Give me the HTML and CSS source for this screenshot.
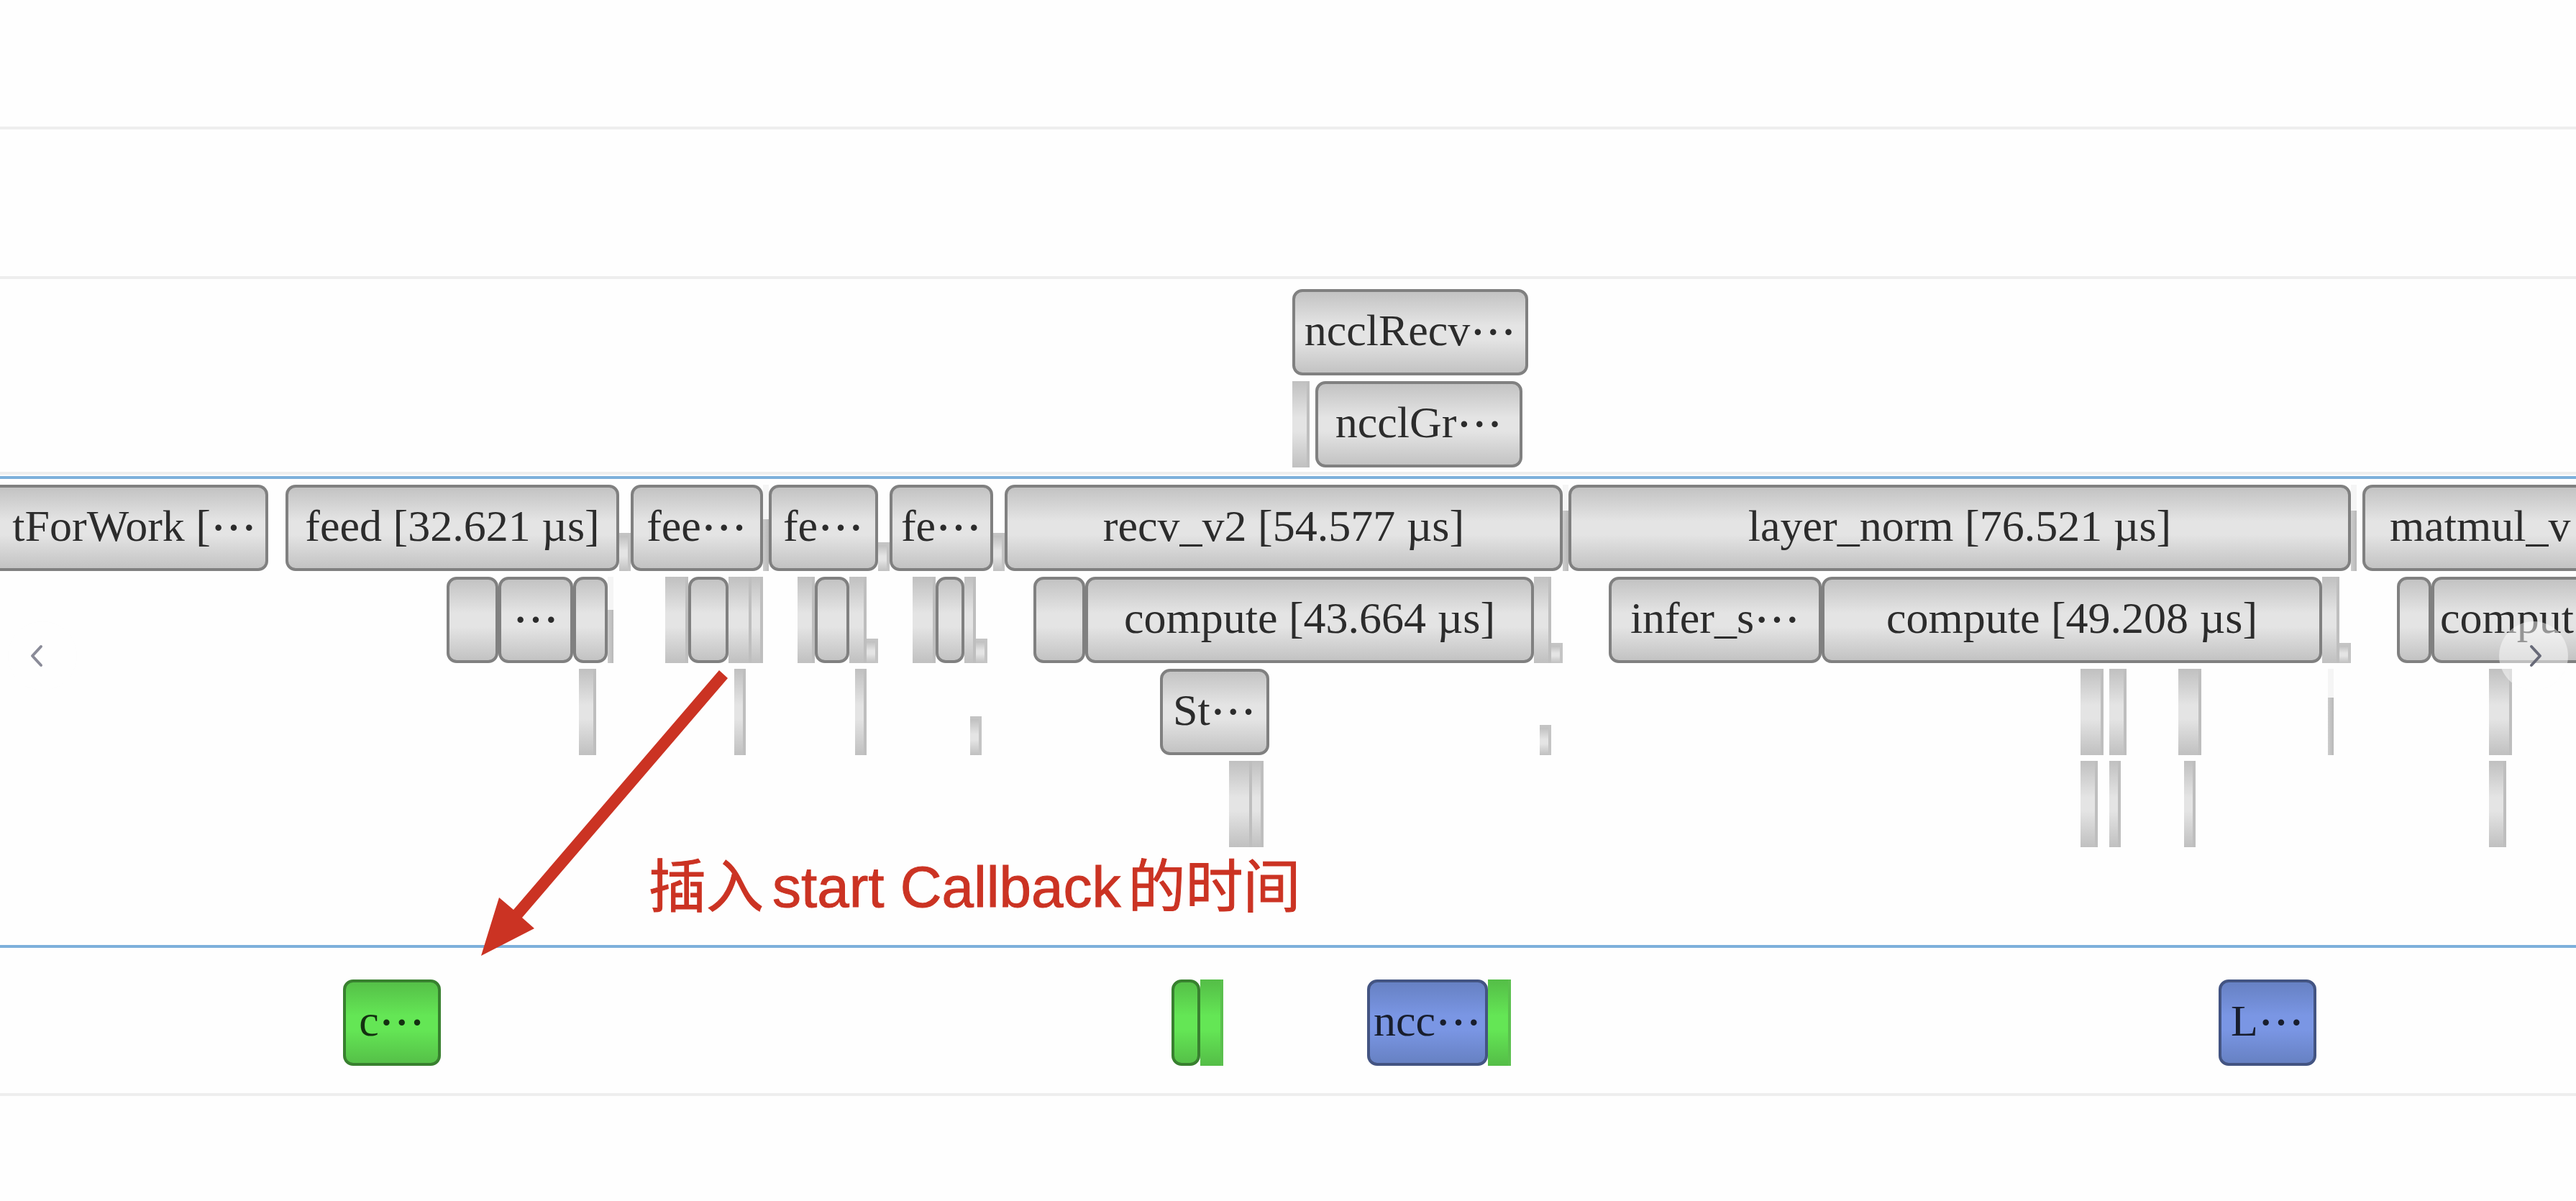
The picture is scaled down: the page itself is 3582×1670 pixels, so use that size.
FILE: index.html
```html
<!DOCTYPE html>
<html lang="zh-CN">
<head>
<meta charset="utf-8">
<meta name="viewport" content="width=device-width, initial-scale=1">
<title>Timeline</title>
<link rel="stylesheet" href="styles.css">
</head>
<body>
<main class="timeline">
  <section class="lane lane-short"></section>
  <section class="lane lane-tall"></section>

  <section class="lane lane-nccl">
    <div class="row">
      <div class="span" style="--gap:1797;--len:328">ncclRecv<span class="dots">⋯</span></div>
    </div>
    <div class="row">
      <div class="tick" style="--gap:1797;--len:24"></div>
      <div class="span" style="--gap:8;--len:288">ncclGr<span class="dots">⋯</span></div>
    </div>
  </section>

  <section class="lane lane-host">
    <div class="row">
      <div class="span cut-left" style="--len:373">tForWork [<span class="dots">⋯</span></div>
      <div class="span" style="--gap:24;--len:464">feed [32.621 µs]</div>
      <div class="tick partial" style="--len:16;--load:53"></div>
      <div class="span" style="--len:184">fee<span class="dots">⋯</span></div>
      <div class="tick faint" style="--len:8;--load:72"></div>
      <div class="span" style="--len:152">fe<span class="dots">⋯</span></div>
      <div class="tick partial" style="--len:16;--load:40"></div>
      <div class="span" style="--len:144">fe<span class="dots">⋯</span></div>
      <div class="tick partial" style="--len:16;--load:53"></div>
      <div class="span" style="--len:776">recv_v2 [54.577 µs]</div>
      <div class="tick faint" style="--len:8;--load:84"></div>
      <div class="span" style="--len:1088">layer_norm [76.521 µs]</div>
      <div class="tick faint" style="--len:8;--load:84"></div>
      <div class="span cut-right inset" style="--gap:8;--len:297">matmul_v</div>
    </div>
    <div class="row">
      <div class="span" style="--gap:621;--len:72"></div>
      <div class="span" style="--len:104"><span class="dots">⋯</span></div>
      <div class="span" style="--len:48"></div>
      <div class="tick faint" style="--len:8;--load:74"></div>
      <div class="tick" style="--gap:72;--len:32"></div>
      <div class="span" style="--len:56"></div>
      <div class="tick" style="--len:32"></div>
      <div class="tick" style="--len:16"></div>
      <div class="tick" style="--gap:48;--len:24"></div>
      <div class="span" style="--len:48"></div>
      <div class="tick" style="--len:24"></div>
      <div class="tick partial" style="--len:16;--load:34"></div>
      <div class="tick" style="--gap:48;--len:32"></div>
      <div class="span" style="--len:40"></div>
      <div class="tick" style="--len:16"></div>
      <div class="tick partial" style="--len:16;--load:34"></div>
      <div class="span" style="--gap:64;--len:72"></div>
      <div class="span" style="--len:624">compute [43.664 µs]</div>
      <div class="tick" style="--len:24"></div>
      <div class="tick partial" style="--len:16;--load:28"></div>
      <div class="span" style="--gap:64;--len:296">infer_s<span class="dots">⋯</span></div>
      <div class="span" style="--len:696">compute [49.208 µs]</div>
      <div class="tick" style="--len:24"></div>
      <div class="tick partial" style="--len:16;--load:28"></div>
      <div class="span" style="--gap:64;--len:48"></div>
      <div class="span cut-right" style="--len:201">comput</div>
    </div>
    <div class="row">
      <div class="tick" style="--gap:805;--len:24"></div>
      <div class="tick" style="--gap:192;--len:16"></div>
      <div class="tick" style="--gap:152;--len:16"></div>
      <div class="tick partial" style="--gap:144;--len:16;--load:54"></div>
      <div class="span" style="--gap:248;--len:152">St<span class="dots">⋯</span></div>
      <div class="tick partial" style="--gap:376;--len:16;--load:42"></div>
      <div class="tick" style="--gap:736;--len:32"></div>
      <div class="tick" style="--gap:8;--len:24"></div>
      <div class="tick" style="--gap:72;--len:32"></div>
      <div class="tick faint" style="--gap:176;--len:8;--load:80"></div>
      <div class="tick" style="--gap:216;--len:32"></div>
    </div>
    <div class="row">
      <div class="tick" style="--gap:1709;--len:32"></div>
      <div class="tick" style="--len:16"></div>
      <div class="tick" style="--gap:1136;--len:24"></div>
      <div class="tick" style="--gap:16;--len:16"></div>
      <div class="tick" style="--gap:88;--len:16"></div>
      <div class="tick" style="--gap:408;--len:24"></div>
    </div>
  </section>

  <section class="lane lane-device">
    <div class="row">
      <div class="span green" style="--gap:477;--len:136">c<span class="dots">⋯</span></div>
      <div class="span green" style="--gap:1016;--len:40"></div>
      <div class="tick green" style="--len:32"></div>
      <div class="span blue" style="--gap:200;--len:168">ncc<span class="dots">⋯</span></div>
      <div class="tick green" style="--len:32"></div>
      <div class="span blue" style="--gap:984;--len:136">L<span class="dots">⋯</span></div>
    </div>
  </section>

  <svg class="arrow" width="344" height="398" viewBox="0 0 344 398" aria-hidden="true">
    <path d="M331 1 L343 12 L57 345 L74 360 L0 398 L25 317 L45 334 Z"/>
  </svg>
  <p class="note">插入 <span class="latin">start Callback</span> 的时间</p>

  <button class="nav nav-prev" type="button" aria-label="Previous">
    <svg width="96" height="96" viewBox="0 0 96 96"><path d="M46 35 L34 48 L46 61"/></svg>
  </button>
  <button class="nav nav-next" type="button" aria-label="Next">
    <svg width="96" height="96" viewBox="0 0 96 96"><path d="M45 35 L57 48 L45 61"/></svg>
  </button>
</main>
</body>
</html>
```

FILE: styles.css
```css
:root {
  --unit: calc(100% / 3582);
  --row: 120px;
}

* {
  box-sizing: border-box;
}

body {
  margin: 0;
  background: #fefefe;
}

.timeline {
  position: relative;
  min-height: 100vh;
  overflow: hidden;
  font-family: "Liberation Serif", serif;
  font-size: 62px;
}

/* Lanes */

.lane {
  display: flex;
  flex-direction: column;
  gap: 8px;
  border-bottom: 4px solid #eeeeee;
}

.lane-short {
  min-height: 180px;
}

.lane-tall {
  min-height: 208px;
}

.lane-nccl {
  padding: 14px 0 6px;
}

.lane-host {
  margin-top: 2px;
  padding: 8px 0 136px;
  border-top: 4px solid #7db0db;
  border-bottom-color: #7db0db;
}

.lane-device {
  padding: 44px 0 38px;
}

.row {
  display: flex;
  align-items: flex-end;
  height: var(--row);
}

/* Spans: --gap is the idle time before, --len the duration */

.span,
.tick {
  --edge: #c0c0c0;
  --core: #e4e4e4;
  flex: none;
  width: calc(var(--len) * var(--unit));
  height: var(--row);
  margin-left: calc(var(--gap, 0) * var(--unit));
  background: linear-gradient(var(--edge), var(--core) 42%, var(--core) 58%, var(--edge));
}

.span {
  display: flex;
  justify-content: center;
  overflow: hidden;
  border: 4px solid #808080;
  border-radius: 14px;
  background-origin: border-box;
  color: #2c2c2c;
  line-height: 106px;
  white-space: nowrap;
}

.dots {
  font-family: "Noto Sans CJK SC", sans-serif;
  font-size: 64px;
  line-height: 104px;
}

.cut-left {
  justify-content: flex-end;
  padding-right: 12px;
  border-left: 0;
  border-top-left-radius: 0;
  border-bottom-left-radius: 0;
}

.cut-right {
  justify-content: flex-start;
  padding-left: 8px;
  border-right: 0;
  border-top-right-radius: 0;
  border-bottom-right-radius: 0;
}

.inset {
  padding-left: 34px;
}

.tick {
  border-right: 4px solid #bebebe;
}

.partial {
  height: calc(var(--load) * 1px);
  border: 4px solid #c4c4c4;
  border-width: 4px 4px 0 0;
}

.faint {
  border-top: calc(var(--row) - var(--load) * 1px) solid #f5f5f5;
  border-right: 0;
  background: linear-gradient(90deg, #cdcdcd, #b8b8b8);
}

.green {
  --edge: #54bd47;
  --core: #64e655;
}

.span.green {
  border-color: #38802f;
  color: #143011;
}

.tick.green {
  border-right-color: #5bc04e;
}

.span.blue {
  --edge: #657fc0;
  --core: #7a96e4;
  border-color: #435482;
  color: #181e2e;
}

/* Annotation */

.arrow {
  position: absolute;
  top: 931px;
  left: calc(669 * var(--unit));
  fill: #cb3323;
}

.note {
  position: absolute;
  top: 1176px;
  left: calc(902 * var(--unit));
  margin: 0;
  color: #cb3323;
  font-family: "Noto Sans CJK SC", sans-serif;
  font-size: 80px;
  line-height: 100px;
  white-space: nowrap;
  -webkit-text-stroke: 1px #cb3323;
}

.latin {
  margin: 0 -8px 0 -6px;
  font-family: "Liberation Sans", sans-serif;
}

/* Scroll buttons */

.nav {
  position: absolute;
  top: 864px;
  width: 96px;
  height: 96px;
  padding: 0;
  border: 0;
  border-radius: 50%;
  background: rgba(254, 254, 254, 0.5);
  cursor: pointer;
}

.nav svg {
  display: block;
  fill: none;
  stroke: #8a8b98;
  stroke-width: 4;
  stroke-linecap: round;
  stroke-linejoin: round;
}

.nav-prev {
  left: 11px;
}

.nav-next {
  right: 11px;
}

.nav-next svg {
  stroke: #686a78;
}
```
